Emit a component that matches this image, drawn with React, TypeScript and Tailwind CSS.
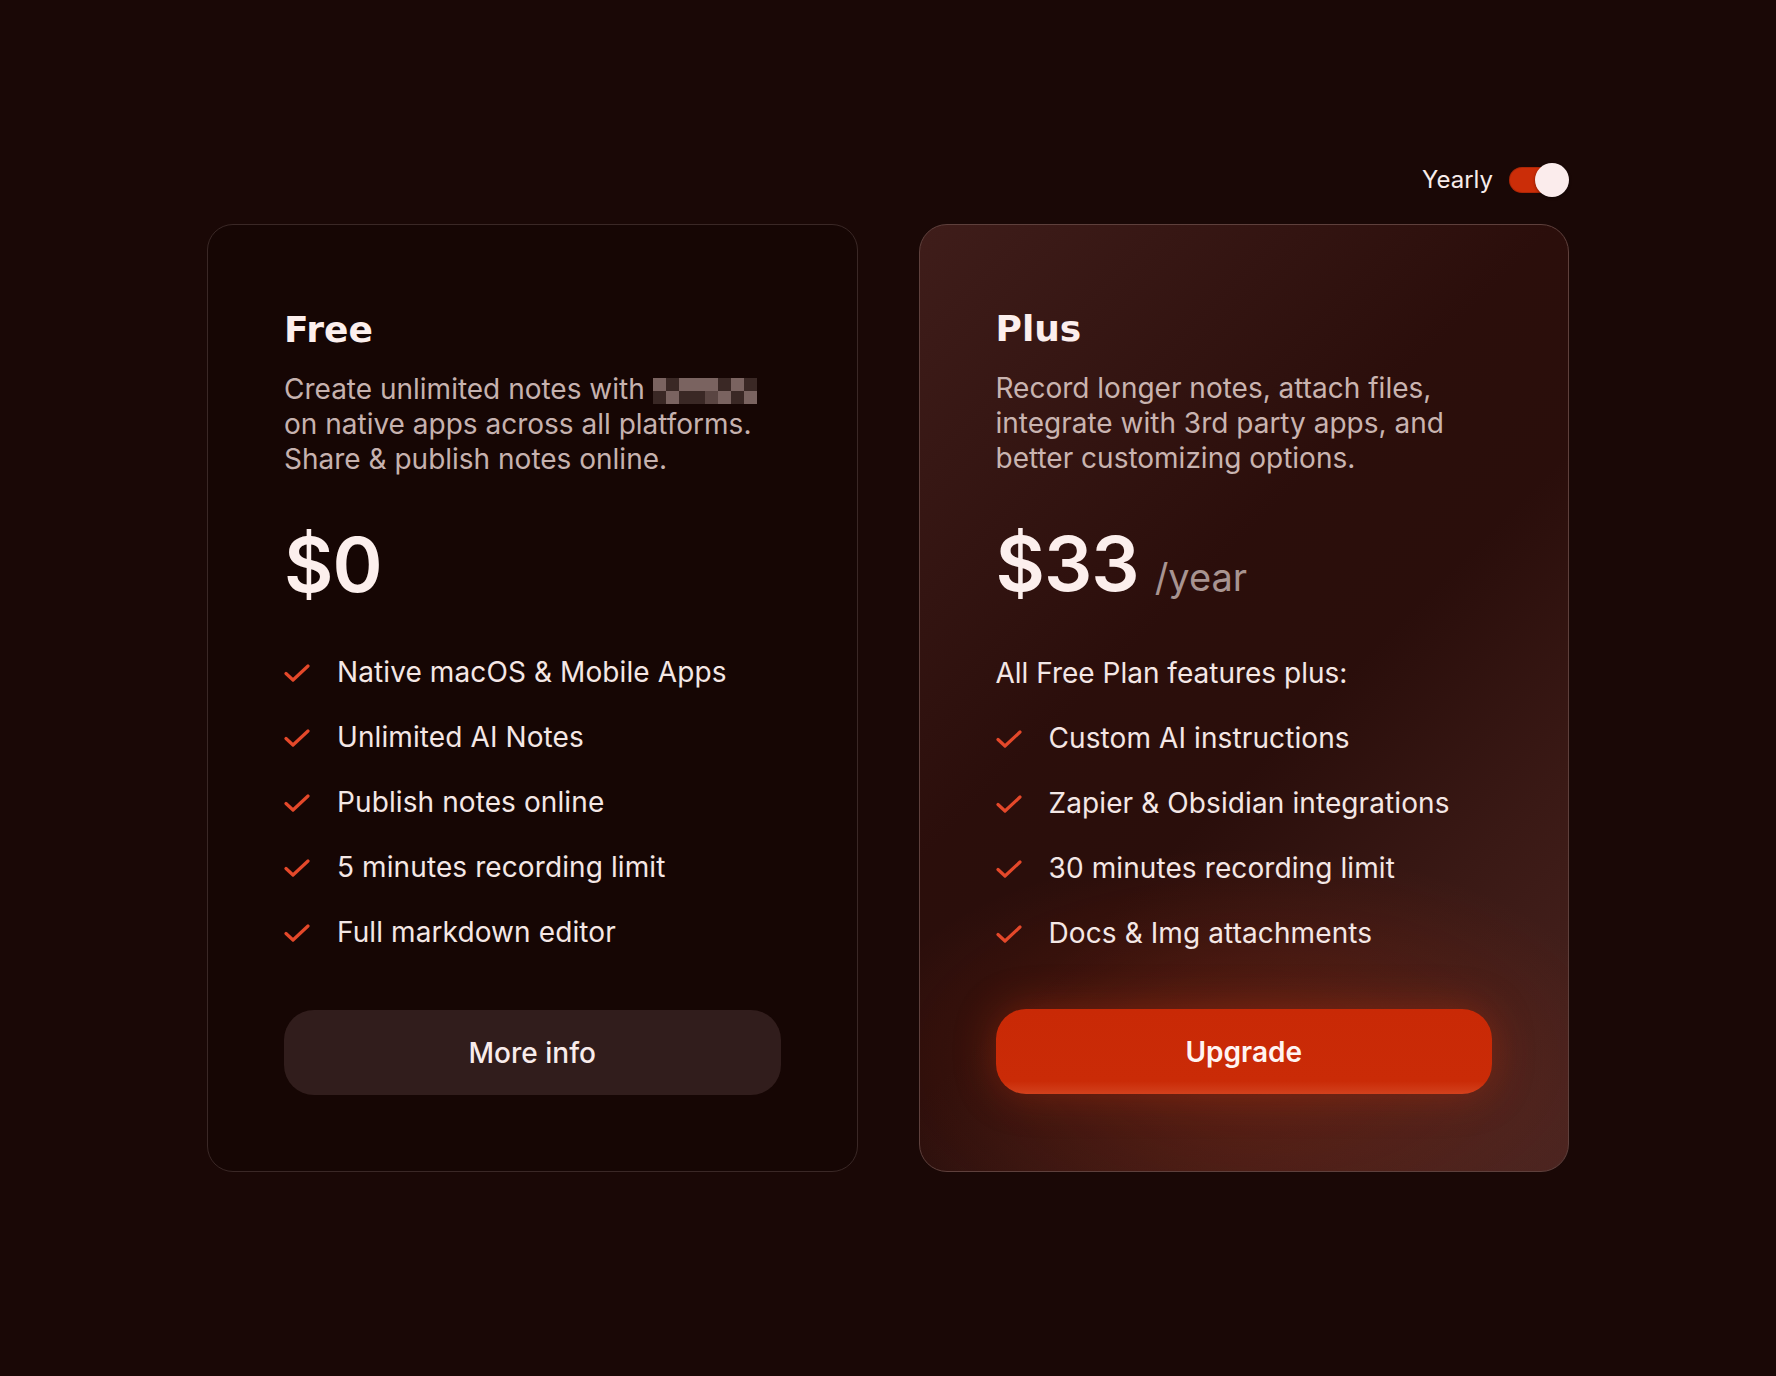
import React from "react";

function Check() {
  return (
    <svg width="26" height="20" viewBox="0 0 26 20" fill="none" className="shrink-0">
      <polyline points="2,10.5 9,17 24,3" stroke="#e4482a" strokeWidth="3.2" strokeLinecap="round" strokeLinejoin="round" />
    </svg>
  );
}

function Feature({ text }: { text: string }) {
  return (
    <li className="flex h-[35px] items-center gap-[27px]">
      <Check />
      <span className="text-[28px] leading-[35px] tracking-[0.1px] text-[#f4e7e5]">{text}</span>
    </li>
  );
}

const mosaic = [
  ["#7a6360", "#3a2825", "#7a6360", "#7a6360", "#7a6360", "#3a2825", "#7a6360", "#3a2825"],
  ["#3a2825", "#7a6360", "#3a2825", "#3a2825", "#5a4542", "#7a6360", "#3a2825", "#7a6360"],
];

function Mosaic() {
  return (
    <span className="ml-[8px] inline-grid h-[26px] grid-cols-8 align-middle leading-none">
      {mosaic.flatMap((row, r) =>
        row.map((c, i) => (
          <span key={`${r}-${i}`} className="block h-[13px] w-[13px]" style={{ backgroundColor: c }} />
        ))
      )}
    </span>
  );
}

export default function App() {
  return (
    <div className="h-[1376px] w-full bg-[#1a0806] font-['Inter',sans-serif] text-[#f4e7e5]">
      <div className="mx-auto w-[1362px] pt-[162px]">
        <div className="flex h-[35px] items-center justify-end gap-[16px]">
          <span className="text-[24px] text-[#f7ecea]">Yearly</span>
          <div className="relative h-[34px] w-[60px]">
            <div className="absolute left-0 top-[4px] h-[26px] w-[54px] rounded-full bg-[#cb2d08] shadow-[inset_0_0_0_1px_rgba(0,0,0,0.15)]" />
            <div className="absolute right-0 top-0 h-[34px] w-[34px] rounded-full bg-[#fbecec] shadow-[0_1px_3px_rgba(0,0,0,0.4)]" />
          </div>
        </div>

        <div className="mt-[27px] grid grid-cols-2 gap-[61px]">
          {/* Free */}
          <div className="flex flex-col rounded-[26px] border border-[#3a2826] bg-[#160604] px-[76px] pb-[76px] pt-[84px]">
            <h2 className="font-['DejaVu_Sans',sans-serif] text-[36px] font-bold leading-[42px] text-[#fcefed]">Free</h2>
            <p className="mt-[21px] text-[28px] leading-[35px] text-[#c6b2af]">
              Create unlimited notes with
              <Mosaic />
              <br />
              on native apps across all platforms.
              <br />
              Share &amp; publish notes online.
            </p>
            <div className="mt-[49px] text-[76px] font-semibold leading-[76px] tracking-[-1px] text-[#fcefed]">$0</div>
            <ul className="mt-[53px] flex flex-col gap-[30px]">
              <Feature text="Native macOS & Mobile Apps" />
              <Feature text="Unlimited AI Notes" />
              <Feature text="Publish notes online" />
              <Feature text="5 minutes recording limit" />
              <Feature text="Full markdown editor" />
            </ul>
            <button className="mt-[60px] flex h-[85px] w-full items-center justify-center rounded-[30px] bg-[#311d1c] text-[28px] font-medium text-[#f8eceb]">
              More info
            </button>
          </div>

          {/* Plus */}
          <div className="flex flex-col rounded-[28px] border border-[#5e403c] bg-[radial-gradient(ellipse_60%_22%_at_50%_88%,rgba(190,50,15,0.28),transparent_100%),linear-gradient(135deg,#3f1d1a_0%,#2b0e0b_40%,#2a0e0b_55%,#3a1915_75%,#4b2521_100%)] px-[76px] pb-[76px] pt-[83px]">
            <h2 className="font-['DejaVu_Sans',sans-serif] text-[36px] font-bold leading-[42px] text-[#fcefed]">Plus</h2>
            <p className="mt-[21px] text-[28px] leading-[35px] text-[#c9b4b0]">
              Record longer notes, attach files,
              <br />
              integrate with 3rd party apps, and
              <br />
              better customizing options.
            </p>
            <div className="mt-[49px] flex items-baseline gap-[16px]">
              <span className="text-[76px] font-semibold leading-[76px] tracking-[-1px] text-[#fcefed]">$33</span>
              <span className="text-[38px] leading-[40px] text-[#a89491]">/year</span>
            </div>
            <ul className="mt-[55px] flex flex-col gap-[30px]">
              <li className="flex h-[35px] items-center text-[28px] leading-[35px] text-[#f4e7e5]">All Free Plan features plus:</li>
              <Feature text="Custom AI instructions" />
              <Feature text="Zapier & Obsidian integrations" />
              <Feature text="30 minutes recording limit" />
              <Feature text="Docs & Img attachments" />
            </ul>
            <button className="mt-[58px] flex h-[85px] w-full items-center justify-center rounded-[30px] bg-[linear-gradient(180deg,#c92906_0%,#ca2b07_85%,#d2411d_100%)] text-[28px] font-semibold text-[#fff4f2] shadow-[0_0_40px_rgba(210,55,15,0.35)]">
              Upgrade
            </button>
          </div>
        </div>
      </div>
    </div>
  );
}
